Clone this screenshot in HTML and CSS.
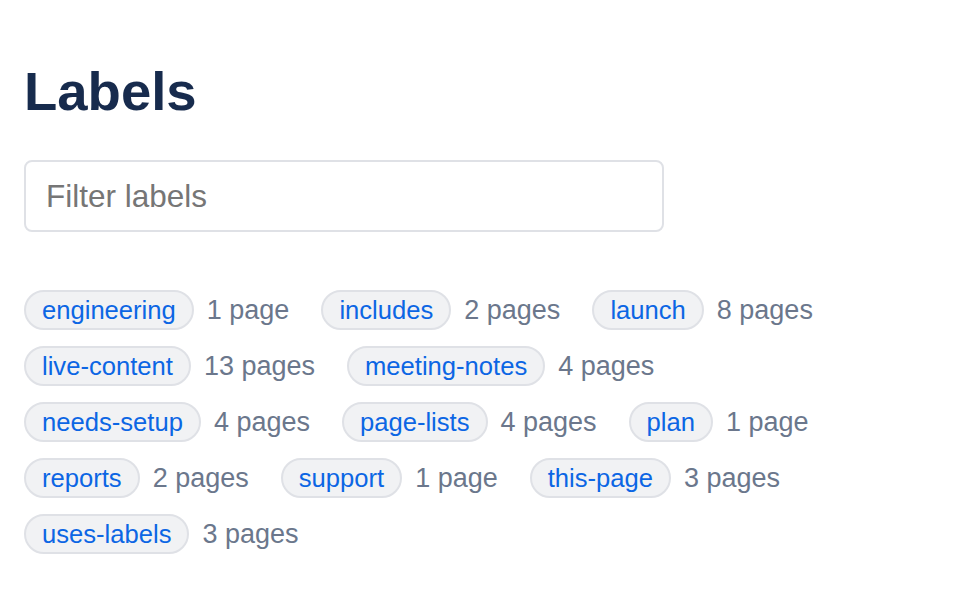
FILE: index.html
```html
<!DOCTYPE html>
<html lang="en">
<head>
<meta charset="utf-8">
<title>Labels</title>
<link rel="stylesheet" href="styles.css">
</head>
<body>
<main class="page">
  <h1 class="title">Labels</h1>
  <input class="filter" type="text" placeholder="Filter labels">
  <ul class="labels">
    <li class="item"><a class="pill" href="#">engineering</a><span class="count">1 page</span></li>
    <li class="item"><a class="pill" href="#">includes</a><span class="count">2 pages</span></li>
    <li class="item"><a class="pill" href="#">launch</a><span class="count">8 pages</span></li>
    <li class="item"><a class="pill" href="#">live-content</a><span class="count">13 pages</span></li>
    <li class="item"><a class="pill" href="#">meeting-notes</a><span class="count">4 pages</span></li>
    <li class="item"><a class="pill" href="#">needs-setup</a><span class="count">4 pages</span></li>
    <li class="item"><a class="pill" href="#">page-lists</a><span class="count">4 pages</span></li>
    <li class="item"><a class="pill" href="#">plan</a><span class="count">1 page</span></li>
    <li class="item"><a class="pill" href="#">reports</a><span class="count">2 pages</span></li>
    <li class="item"><a class="pill" href="#">support</a><span class="count">1 page</span></li>
    <li class="item"><a class="pill" href="#">this-page</a><span class="count">3 pages</span></li>
    <li class="item"><a class="pill" href="#">uses-labels</a><span class="count">3 pages</span></li>
  </ul>
</main>
</body>
</html>
```
FILE: styles.css
```css
* { box-sizing: border-box; }
html, body { margin: 0; padding: 0; background: #ffffff; }
body { font-family: "Liberation Sans", Arial, sans-serif; }
.page { padding: 60px 24px 24px 24px; }
.title {
  margin: 0;
  font-size: 54.5px;
  line-height: 64px;
  font-weight: 700;
  color: #172b4d;
}
.filter {
  display: block;
  margin-top: 36px;
  width: 640px;
  height: 72px;
  padding: 0 20px;
  border: 2px solid #dfe1e6;
  border-radius: 8px;
  font-family: "Liberation Sans", Arial, sans-serif;
  font-size: 31.5px;
  color: #172b4d;
  background: #ffffff;
  outline: none;
}
.filter::placeholder { color: #767676; }
.labels {
  list-style: none;
  margin: 58px 0 0 0;
  padding: 0;
  display: flex;
  flex-wrap: wrap;
  column-gap: 32px;
  row-gap: 16px;
}
.item {
  display: flex;
  align-items: center;
  gap: 13px;
}
.pill {
  display: inline-block;
  height: 40px;
  line-height: 36px;
  padding: 0 16px;
  border: 2px solid #dfe1e6;
  border-radius: 20px;
  background: #f1f2f4;
  color: #0c66e4;
  font-size: 25.6px;
  text-decoration: none;
}
.count {
  font-size: 27px;
  color: #6b778c;
}
```
